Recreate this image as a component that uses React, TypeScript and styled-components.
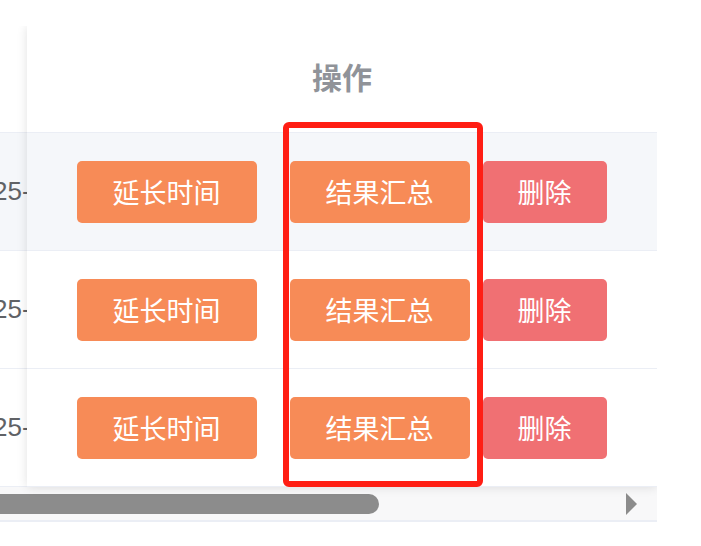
import React from "react";
import styled, { createGlobalStyle } from "styled-components";

const Global = createGlobalStyle`
  html, body { margin: 0; padding: 0; background: #fff; }
  body { font-family: "Noto Sans CJK SC", "Liberation Sans", sans-serif; }
`;

const Page = styled.div`
  position: relative;
  width: 701px;
  height: 546px;
  padding-top: 26px;
  box-sizing: border-box;
`;

const Table = styled.div`
  width: 657px;
  overflow: hidden;
  display: flex;
  flex-direction: column;
`;

const Body = styled.div`
  display: flex;
`;

const ScrollPart = styled.div`
  width: 27px;
  overflow: hidden;
  display: flex;
  flex-direction: column;
`;

const FixedPart = styled.div`
  width: 630px;
  position: relative;
  z-index: 1;
  background: #fff;
  box-shadow: 0 0 10px rgba(0, 0, 0, 0.12);
  display: flex;
  flex-direction: column;
`;

const HeaderCell = styled.div`
  height: 106px;
  box-sizing: border-box;
  padding-bottom: 7px;
  border-bottom: 1px solid #ebeef5;
  display: flex;
  align-items: center;
  justify-content: center;
  background: #fff;
  color: #909399;
  font-weight: 700;
  font-size: 30px;
  font-family: "Noto Sans CJK SC", sans-serif;
  height: 107px;
`;

const BodyCell = styled.div<{ $hover?: boolean }>`
  height: 117px;
  border-bottom: 1px solid #ebeef5;
  display: flex;
  align-items: center;
  justify-content: center;
  background: ${(p) => (p.$hover ? "#f5f7fa" : "#fff")};
`;

const DateCell = styled(BodyCell)`
  justify-content: flex-start;
  overflow: hidden;
`;

const DateText = styled.span`
  white-space: nowrap;
  margin-left: -7px;
  font-family: "Liberation Sans", Arial, sans-serif;
  font-size: 26px;
  color: #606266;
`;

const ButtonGroup = styled.div`
  display: flex;
  align-items: center;
  margin-left: -1px;
`;

const ActionButton = styled.button<{ $tone: "warn" | "danger"; $gap?: number }>`
  height: 62px;
  padding: 0 ${(p) => (p.$tone === "warn" ? 36 : 35)}px;
  margin: 0 0 0 ${(p) => p.$gap ?? 0}px;
  border: none;
  border-radius: 5px;
  background: ${(p) => (p.$tone === "warn" ? "#f78b57" : "#f07073")};
  color: #fff;
  font-family: "Noto Sans CJK SC", sans-serif;
  font-size: 27px;
  line-height: 1;
  white-space: nowrap;
  cursor: pointer;
`;

const ScrollTrack = styled.div`
  height: 33px;
  background: #f8f8f9;
  border-bottom: 2px solid #ebeef5;
  display: flex;
  align-items: center;
  justify-content: space-between;
  padding-right: 20px;
`;

const Thumb = styled.div`
  width: 379px;
  height: 20px;
  background: #8c8c8c;
  border-radius: 0 10px 10px 0;
`;

const Highlight = styled.div`
  position: absolute;
  left: 283px;
  top: 122px;
  width: 200px;
  height: 365px;
  box-sizing: border-box;
  border: 6px solid #ff1e14;
  border-radius: 6px;
  z-index: 5;
  pointer-events: none;
`;

const rows = [0, 1, 2];

export default function App() {
  return (
    <>
      <Global />
      <Page>
        <Table>
          <Body>
            <ScrollPart>
              <HeaderCell />
              {rows.map((r) => (
                <DateCell key={r} $hover={r === 0}>
                  <DateText>25-</DateText>
                </DateCell>
              ))}
            </ScrollPart>
            <FixedPart>
              <HeaderCell>操作</HeaderCell>
              {rows.map((r) => (
                <BodyCell key={r} $hover={r === 0}>
                  <ButtonGroup>
                    <ActionButton $tone="warn">延长时间</ActionButton>
                    <ActionButton $tone="warn" $gap={33}>
                      结果汇总
                    </ActionButton>
                    <ActionButton $tone="danger" $gap={13}>
                      删除
                    </ActionButton>
                  </ButtonGroup>
                </BodyCell>
              ))}
            </FixedPart>
          </Body>
          <ScrollTrack>
            <Thumb />
            <svg width="11" height="22" viewBox="0 0 11 22">
              <polygon points="0,0 11,11 0,22" fill="#8c8c8c" />
            </svg>
          </ScrollTrack>
        </Table>
        <Highlight />
      </Page>
    </>
  );
}
